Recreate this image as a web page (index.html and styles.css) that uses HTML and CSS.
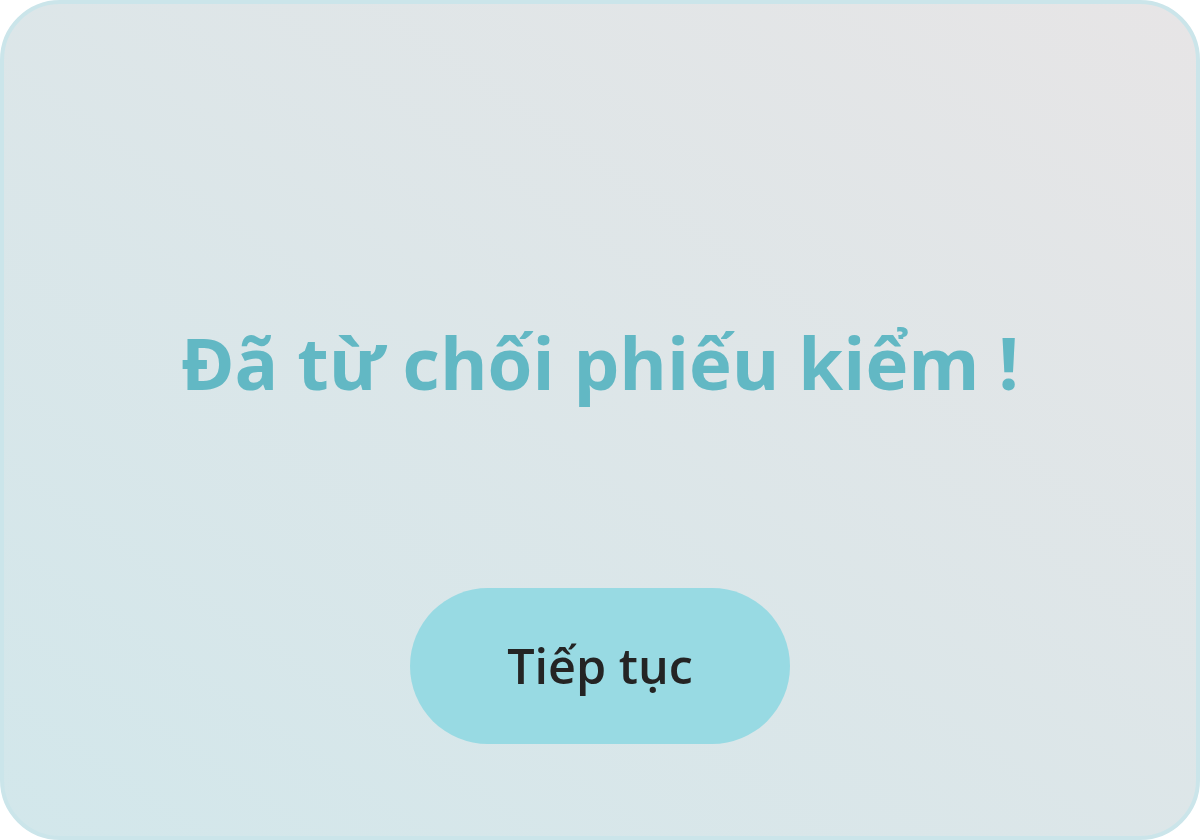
FILE: index.html
```html
<!DOCTYPE html>
<html lang="vi">
<head>
<meta charset="utf-8">
<link rel="stylesheet" href="styles.css">
</head>
<body>
<div class="card">
  <h1 class="title">Đã từ chối phiếu kiểm !</h1>
  <button class="btn">Tiếp tục</button>
</div>
</body>
</html>
```
FILE: styles.css
```css
html, body { margin: 0; padding: 0; background: #ffffff; }
body { width: 1200px; height: 840px; font-family: "Open Sans", "Noto Sans", sans-serif; }
.card {
  box-sizing: border-box;
  width: 1200px;
  height: 840px;
  border: 4px solid #cbe5ea;
  border-radius: 60px;
  background: linear-gradient(to top right, #d2e7eb 0%, #e7e5e6 100%);
  display: flex;
  flex-direction: column;
  align-items: center;
}
.title {
  margin: 0;
  margin-top: 303px;
  font-size: 72.5px;
  line-height: 110px;
  font-weight: 700;
  color: #62b8c4;
  letter-spacing: 0;
}
.btn {
  margin-top: 171px;
  width: 380px;
  height: 156px;
  border: none;
  border-radius: 78px;
  background: #98dae3;
  color: #242424;
  font-family: "Open Sans", "Noto Sans", sans-serif;
  font-size: 48.5px;
  font-weight: 600;
  padding: 0 0 2px 0;
}
```
